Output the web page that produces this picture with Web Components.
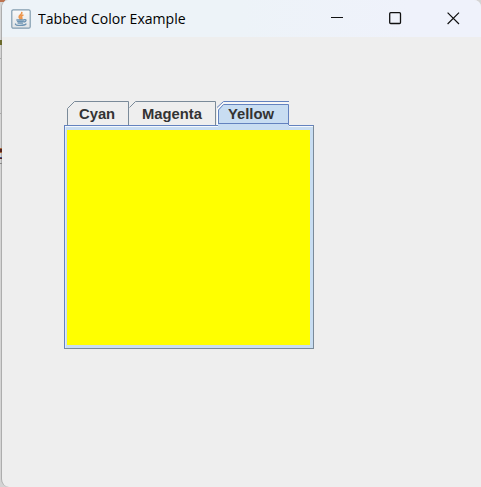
<!DOCTYPE html>
<html lang="en"><head><meta charset="utf-8"><title>Tabbed Color Example</title>
<style>html,body{margin:0;height:100%;overflow:hidden;background:#d4d4d4}</style></head><body>
<app-window><title-bar slot="bar">Tabbed Color Example</title-bar>
<tab-pane><color-tab slot="tabs" style="width:62px">Cyan</color-tab><color-tab slot="tabs" style="width:87px">Magenta</color-tab><color-tab slot="tabs" selected style="width:73px">Yellow</color-tab></tab-pane></app-window>
<script>
const define=(name,html)=>customElements.define(name,class extends HTMLElement{
constructor(){super();this.attachShadow({mode:'open'}).innerHTML=html}});
define('app-window',`<style>
:host{display:grid;grid-template-columns:1px 480px;height:487px;width:481px;box-sizing:border-box;background:#d4d4d4}
.edge{display:block;overflow:visible;z-index:1}
.win{box-sizing:border-box;border-left:1px solid #adadad;border-radius:8px 7px 0 8px;background:#eee;overflow:hidden;height:487px}
.body{padding:63px 0 0 62px}
</style><svg class="edge" width="1" height="487" shape-rendering="crispEdges"><path fill="#bd7350" d="M0 0h5v1H4v1H0z"/><path fill="#6b6a2c" d="M0 40h2v5H0z"/><path fill="#aaa" d="M0 58h1v1H0zM0 113h1v1H0z"/><path fill="#56241e" d="M0 149h2v3H0z"/><path fill="#a5673c" d="M0 148h2v1H0zM0 152h2v1H0z"/><path fill="#3d4e8a" d="M0 157h2v1H0z"/><path fill="#56241e" d="M0 158h2v1H0z"/><path fill="#888" d="M0 163h2v1H0z"/></svg>
<div class="win"><slot name="bar"></slot><div class="body"><slot></slot></div></div>`);
define('title-bar',`<style>
:host{display:flex;align-items:center;height:37px;box-sizing:border-box;padding-left:9px;background:linear-gradient(90deg,#edf3f8 50%,#eff2fb 85%);font:14.8px "Open Sans","Noto Sans",sans-serif;color:#000}
.t{width:160px;margin:0 0 2px 7px;white-space:nowrap;transform:scaleX(.95);transform-origin:0 50%}
.c{margin-left:auto;display:flex;gap:45px;margin:0 21px 1px auto}svg{display:block;flex:none}
</style><svg width="20" height="20" viewBox="0 0 20 20"><defs><linearGradient id="g" x2="0" y2="1"><stop stop-color="#fafafa"/><stop offset="1" stop-color="#dfe3e6"/></linearGradient></defs><rect x=".8" y=".8" width="18.4" height="18.4" rx="1.5" fill="url(#g)" stroke="#819caf" stroke-width="1.2"/><g fill="none" stroke-linecap="round"><path stroke="#ed964d" stroke-width="1.7" d="M10.8 3.5c.4 2-3 2.6-2.6 4.5.2 1 1.2 1.4 1 2.2M11.8 6.2c-1.8.8-2.2 1.6-1.2 2.5.5.5.2 1-.3 1.5"/><path stroke="#6d94b3" stroke-width="1.3" d="M5.8 11h7.2M6.5 12.7h5.8M7.2 14.2h4.3M13.5 10.7c2.3-.5 1.8 2-.5 2.3M4.5 15c-.8 1.8 9 1.8 10.5 0"/></g></svg>
<span class="t"><slot></slot></span><span class="c"><svg width="13" height="13"><path stroke="#111" d="M0 5.5h12"/></svg><svg width="13" height="13"><rect x=".7" y=".7" width="10.8" height="10.8" rx="1" fill="none" stroke="#111" stroke-width="1.3"/></svg><svg width="13" height="13"><path stroke="#111" stroke-width="1.2" d="M.6.6l11.4 11.4M12 .6L.6 12"/></svg></span>`);
define('tab-pane',`<style>
:host{display:block;width:250px}
.tabs{display:flex;padding:1px 0 0 3px;height:24px;position:relative;z-index:1}
.pane{box-sizing:border-box;width:250px;height:224px;border:1px solid #7a8a99;border-top-color:#6382bf;border-left-color:#6382bf;background:#c8ddf2;padding:4px 3px 3px 2px;box-shadow:inset 0 1px #f4f8fc,inset 1px 0 #dfeaf6}
.color{height:100%;background:#ff0}
</style><div class="tabs"><slot name="tabs"></slot></div><div class="pane"><div class="color"></div></div>`);
customElements.define('color-tab',class extends HTMLElement{
constructor(){super();this.attachShadow({mode:'open'})}
connectedCallback(){const s=this.hasAttribute('selected'),w=parseInt(this.style.width);
const art=s?`<path fill="#c8ddf2" d="M2 26V8l5-4h66v22z"/><path stroke="#fff" d="M1.5 8.5l6-6.5H73M1.5 8v16"/><path stroke="#6382bf" d="M1 6.5L7.5 .5H73M2.5 23V9l5-5.5H72.5V24M2 22.5h71"/>`
:`<path stroke="#7a8a99" d="${w===62?'M.5 24V7.5L7.5 .5H61.5V24':'M.5 6.5l6-6H86.5V24'}"/>`;
this.shadowRoot.innerHTML=`<style>
:host{display:grid;height:24px;flex:none;font:bold 15px "Liberation Sans",Arial,sans-serif;color:#333}
svg,span{grid-area:1/1}svg{display:block;overflow:visible}
span{line-height:26px;height:24px;padding-left:${w===87?13:12}px;white-space:nowrap;z-index:1;transform:scaleX(.985);transform-origin:12px 50%}
</style><svg width="${w}" height="24" fill="none">${art}</svg><span><slot></slot></span>`}});
</script></body></html>
